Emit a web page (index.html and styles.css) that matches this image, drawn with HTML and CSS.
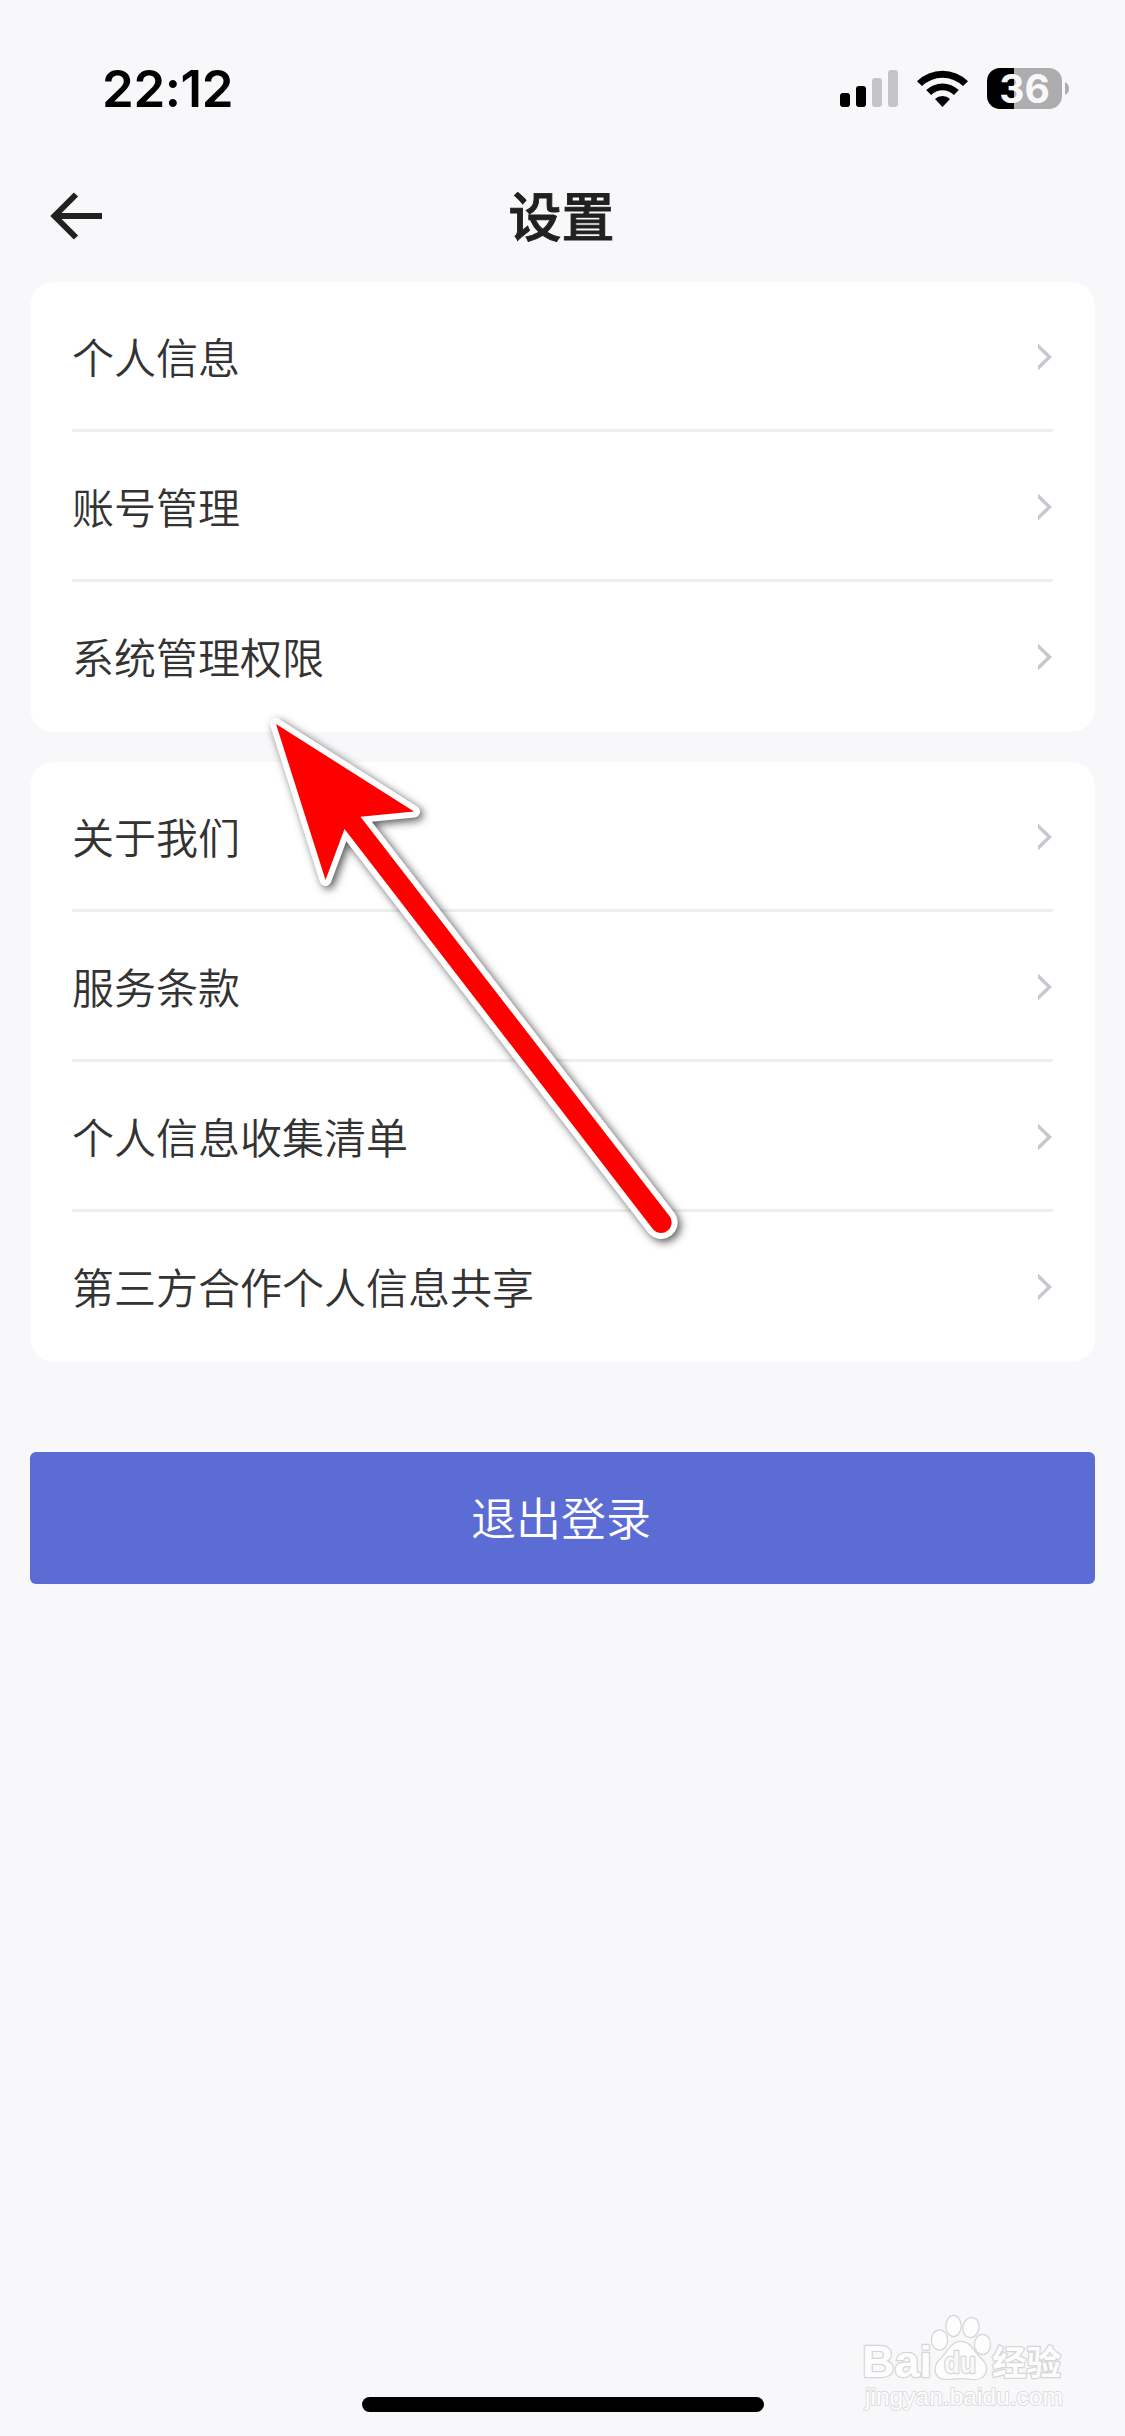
FILE: index.html
```
<!DOCTYPE html>
<html lang="zh-CN">

<head>
    <meta charset="UTF-8">
    <meta name="viewport" content="width=device-width, initial-scale=1.0">
    <title>设置</title>
    <link rel="stylesheet" href="styles.css">
</head>

<body>
    <div class="status-bar">
        <span class="time">22:12</span>
        <div class="status-icons">
            <svg class="signal" width="58" height="37" viewBox="0 0 58 37">
                <rect x="0" y="23" width="10" height="14" rx="3" />
                <rect x="16" y="16" width="10" height="21" rx="3" />
                <rect class="off" x="32" y="8" width="10" height="29" rx="3" />
                <rect class="off" x="48" y="0" width="10" height="37" rx="3" />
            </svg>
            <svg class="wifi" width="51" height="37" viewBox="0 0 51 37">
                <path d="M0 11.2A36.5 36.5 0 0 1 51 11.2L46 16.1A29.5 29.5 0 0 0 5 16.1Z" />
                <path d="M9.2 20A23.5 23.5 0 0 1 41.8 20L36.9 25A16.2 16.2 0 0 0 14.1 25Z" />
                <path d="M18 29A11 11 0 0 1 33 29L25.5 37Z" />
            </svg>
            <div class="battery">
                <span class="battery-level">36</span>
                <svg class="battery-cap" width="4" height="13" viewBox="0 0 4 13">
                    <path d="M0 0Q4 2 4 6.5T0 13Z" />
                </svg>
            </div>
        </div>
    </div>

    <header class="header">
        <a class="back" href="#">
            <svg width="54" height="48" viewBox="0 0 54 48">
                <path d="M54 24H6M28 2.5L6.5 24L28 45.5" />
            </svg>
        </a>
        <h1>设置</h1>
    </header>

    <main class="content">
        <ul class="card">
            <li class="row"><span>个人信息</span><svg class="chevron" width="15" height="26" viewBox="0 0 15 26"><path d="M-1.5 .5L11.5 13L-1.5 25.5" /></svg></li>
            <li class="row"><span>账号管理</span><svg class="chevron" width="15" height="26" viewBox="0 0 15 26"><path d="M-1.5 .5L11.5 13L-1.5 25.5" /></svg></li>
            <li class="row"><span>系统管理权限</span><svg class="chevron" width="15" height="26" viewBox="0 0 15 26"><path d="M-1.5 .5L11.5 13L-1.5 25.5" /></svg></li>
        </ul>

        <ul class="card">
            <li class="row"><span>关于我们</span><svg class="chevron" width="15" height="26" viewBox="0 0 15 26"><path d="M-1.5 .5L11.5 13L-1.5 25.5" /></svg></li>
            <li class="row"><span>服务条款</span><svg class="chevron" width="15" height="26" viewBox="0 0 15 26"><path d="M-1.5 .5L11.5 13L-1.5 25.5" /></svg></li>
            <li class="row"><span>个人信息收集清单</span><svg class="chevron" width="15" height="26" viewBox="0 0 15 26"><path d="M-1.5 .5L11.5 13L-1.5 25.5" /></svg></li>
            <li class="row"><span>第三方合作个人信息共享</span><svg class="chevron" width="15" height="26" viewBox="0 0 15 26"><path d="M-1.5 .5L11.5 13L-1.5 25.5" /></svg></li>
        </ul>

        <button class="btn-logout" type="button">退出登录</button>
    </main>

    <div class="home-indicator"></div>

    <!-- Pointer to the permissions row -->
    <svg class="pointer" width="440" height="560" viewBox="250 700 440 560">
        <path d="M276 724L414 811.5L360.5 816.8L669.8 1216.6A10.5 10.5 0 0 1 653.2 1229.4L344.5 829L325.5 880Z" />
    </svg>

    <!-- Watermark -->
    <svg class="watermark" width="220" height="110" viewBox="855 2310 220 110">
        <g class="paw">
            <ellipse cx="939.5" cy="2340" rx="7.5" ry="9.5" />
            <ellipse cx="953.5" cy="2326" rx="7" ry="10" />
            <ellipse cx="971" cy="2327.5" rx="7.5" ry="9.5" transform="rotate(12 971 2327.5)" />
            <ellipse cx="982.5" cy="2344.5" rx="7.5" ry="9.5" />
            <path d="M961 2342C951 2342 948 2352 942 2358C935 2364 934 2371 938 2376C943 2381 952 2378 961 2378S975 2381 982 2377C988 2372 987 2364 980 2358C973 2352 971 2342 961 2342Z" />
        </g>
        <text class="mark" x="862" y="2377" textLength="70" lengthAdjust="spacingAndGlyphs">Bai</text>
        <text class="mark-du" x="944" y="2373" textLength="32" lengthAdjust="spacingAndGlyphs">du</text>
        <text class="mark-cn" x="992" y="2375" textLength="69" lengthAdjust="spacingAndGlyphs">经验</text>
        <text class="mark-url" x="865" y="2405" textLength="198" lengthAdjust="spacingAndGlyphs">jingyan.baidu.com</text>
    </svg>
</body>

</html>
```
FILE: styles.css
```
/* Reset */
* {
    margin: 0;
    padding: 0;
    box-sizing: border-box;
}

body {
    font-family: "Noto Sans CJK SC", sans-serif;
    background-color: #f8f8fa;
    color: #333;
    display: flex;
    flex-direction: column;
    height: 2436px;
    position: relative;
    overflow: hidden;
}

/* Status bar */
.status-bar {
    display: flex;
    justify-content: space-between;
    align-items: center;
    height: 150px;
    padding: 27px 56px 0 102px;
}

.time {
    font-family: Inter, sans-serif;
    font-size: 51px;
    font-weight: 600;
    line-height: 60px;
    letter-spacing: -0.4px;
    color: #000;
}

.status-icons {
    display: flex;
    align-items: center;
    gap: 19px;
}

.signal .off {
    fill: #c5c5c7;
}

.battery {
    display: flex;
    align-items: center;
    gap: 3px;
}

.battery-level {
    width: 75px;
    height: 41px;
    border-radius: 13px;
    background: linear-gradient(to right, #000 36%, #adadaf 36%);
    color: #f8f8fa;
    font-family: Inter, sans-serif;
    font-size: 39px;
    font-weight: 700;
    line-height: 41px;
    text-align: center;
}

.battery-cap {
    fill: #adadaf;
}

/* Header */
.header {
    display: grid;
    grid-template-columns: 150px 1fr 150px;
    align-items: center;
    height: 132px;
}

.back {
    display: flex;
    padding-left: 48px;
}

.back path {
    fill: none;
    stroke: #212121;
    stroke-width: 6;
}

.header h1 {
    padding: 0 2px 4px 0;
    font-size: 53px;
    font-weight: 500;
    -webkit-text-stroke: 0.9px #212121;
    line-height: 60px;
    text-align: center;
    color: #212121;
}

/* Cards */
.content {
    display: flex;
    flex-direction: column;
    gap: 30px;
    padding: 0 30px;
}

.card {
    list-style: none;
    padding: 0 42px;
    border-radius: 24px;
    background: #fff;
}

.row {
    display: flex;
    justify-content: space-between;
    align-items: center;
    height: 150px;
    padding-top: 3px;
    border-bottom: 3px solid #eee;
    font-size: 42px;
    font-weight: 350;
    line-height: 60px;
}

.row span {
    padding-bottom: 3px;
}

.row:last-child {
    border-bottom-color: transparent;
}

.chevron path {
    fill: none;
    stroke: #c8c7ce;
    stroke-width: 3.5;
}

/* Button */
.btn-logout {
    height: 132px;
    margin-top: 60px;
    padding: 0 3px 4px 0;
    border: none;
    border-radius: 6px;
    background-color: #5b6cd4;
    color: #fff;
    font-family: inherit;
    font-size: 45px;
    font-weight: 350;
    cursor: pointer;
}

.home-indicator {
    width: 402px;
    height: 15px;
    margin: auto auto 24px;
    border-radius: 8px;
    background: #000;
}

/* Overlays */
.pointer {
    position: absolute;
    left: 250px;
    top: 700px;
    filter: drop-shadow(3px 3px 4px rgba(0, 0, 0, 0.65));
}

.pointer path {
    fill: #f00;
    stroke: #fff;
    stroke-width: 12;
    stroke-linejoin: round;
    paint-order: stroke;
}

.watermark {
    position: absolute;
    left: 855px;
    top: 2310px;
    fill: #fdfdfd;
    stroke: #d6d6d8;
    stroke-width: 2.5;
    paint-order: stroke;
    stroke-linejoin: round;
}

.mark,
.mark-du {
    font-family: "Liberation Sans", sans-serif;
    font-weight: 700;
    font-size: 44px;
}

.mark-du {
    fill: #f8f8fa;
    font-size: 29px;
}

.mark-cn {
    font-weight: 700;
    font-size: 34px;
}

.mark-url {
    font-family: "Liberation Sans", sans-serif;
    font-size: 24px;
    stroke: #dedee0;
    stroke-width: 2;
}
```
